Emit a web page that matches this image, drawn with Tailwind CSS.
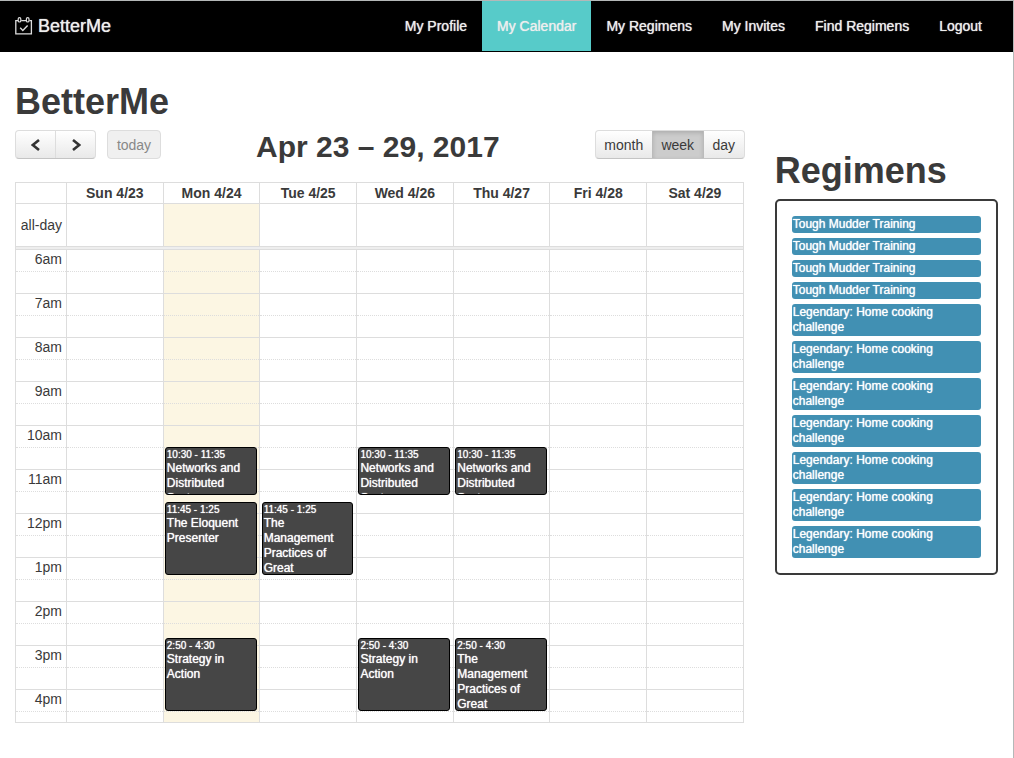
<!DOCTYPE html>
<html lang="en">
<head>
<meta charset="utf-8">
<title>BetterMe</title>
<meta name="viewport" content="width=device-width, initial-scale=1">
<script src="https://cdn.jsdelivr.net/npm/@tailwindcss/browser@4"></script>
</head>
<body class="min-h-screen border-t border-r border-[#b4b8b8] bg-white font-['Liberation_Sans',Arial,sans-serif] text-sm leading-5 text-[#3a3a3a]">
<header class="flex items-start justify-between bg-black pr-4 pb-px pl-[15px] text-[#eee] [text-shadow:0_0_1px_currentColor]">
  <a href="#" class="flex h-[50px] items-center gap-[5px] text-lg">
    <svg class="size-[18px]" viewBox="0 0 18 18" fill="none" stroke="#ddd" aria-hidden="true">
      <path d="M3 3.600H.8v13.200h15.600V3.600h-2M6.200 3.600h4.800" stroke-width="1.300"/>
      <rect x="3.200" y=".6" width="2.600" height="4.400" rx="1.300" stroke-width="1.200"/>
      <rect x="11.400" y=".6" width="2.600" height="4.400" rx="1.300" stroke-width="1.200"/>
      <path d="M5.200 10.800l2.600 2.600 4.800-4.800" stroke-width="1.400"/>
    </svg>
    <span>BetterMe</span>
  </a>
  <nav class="flex leading-[50px] whitespace-nowrap">
    <a href="#" class="px-[15px]">My Profile</a>
    <a href="#" aria-current="page" class="bg-[#57cbc9] px-[15px]">My Calendar</a>
    <a href="#" class="px-[15px]">My Regimens</a>
    <a href="#" class="px-[15px]">My Invites</a>
    <a href="#" class="px-[15px]">Find Regimens</a>
    <a href="#" class="px-[15px]">Logout</a>
  </nav>
</header>

<div class="grid grid-cols-[3fr_1fr]">
  <main class="px-[15px] pt-[30px]">
    <h1 class="text-4xl leading-10 font-bold">BetterMe</h1>
    <div class="mt-2 flex items-start justify-between">
      <div class="flex gap-[11px]">
        <div class="flex overflow-hidden rounded border border-[#ddd] border-b-[#c4c4c4] bg-linear-to-b from-white to-[#e9e9e9]">
          <button type="button" aria-label="Previous week" class="flex h-[27px] w-10 items-center justify-center border-r border-[#ddd]">
            <svg class="size-3" viewBox="0 0 12 12" fill="none" stroke="#333" stroke-width="2.600" aria-hidden="true"><path d="M9 1L2.800 6 9 11"/></svg>
          </button>
          <button type="button" aria-label="Next week" class="flex h-[27px] w-[39px] items-center justify-center">
            <svg class="size-3" viewBox="0 0 12 12" fill="none" stroke="#333" stroke-width="2.600" aria-hidden="true"><path d="M3 1l6.200 5L3 11"/></svg>
          </button>
        </div>
        <button type="button" disabled class="h-[29px] w-[54px] rounded border border-[#ddd] bg-[#f0f0f0] text-[#888]">today</button>
      </div>
      <h2 class="-mt-px text-3xl leading-9 font-bold">Apr 23 – 29, 2017</h2>
      <div class="flex overflow-hidden rounded border border-[#ddd] border-b-[#c4c4c4] bg-linear-to-b from-white to-[#e9e9e9]">
        <button type="button" class="h-[27px] w-14">month</button>
        <button type="button" aria-pressed="true" class="h-[27px] w-[52px] border-x border-[#bbb] bg-[#ccc] shadow-[inset_0_2px_4px_rgba(0,0,0,0.15)]">week</button>
        <button type="button" class="h-[27px] w-10">day</button>
      </div>
    </div>

    <div class="relative mt-[17px] mr-px">
      <table class="w-full table-fixed border-collapse">
        <thead>
          <tr class="h-[21px] leading-5">
            <th class="w-[51px] border border-[#ddd] p-0"></th>
            <th class="border border-[#ddd] p-0">Sun 4/23</th>
            <th class="border border-[#ddd] p-0">Mon 4/24</th>
            <th class="border border-[#ddd] p-0">Tue 4/25</th>
            <th class="border border-[#ddd] p-0">Wed 4/26</th>
            <th class="border border-[#ddd] p-0">Thu 4/27</th>
            <th class="border border-[#ddd] p-0">Fri 4/28</th>
            <th class="border border-[#ddd] p-0">Sat 4/29</th>
          </tr>
        </thead>
        <tbody id="slots">
          <tr class="h-[43px]">
            <td class="border border-[#ddd] p-0 pr-1 text-right">all-day</td>
            <td class="border border-[#ddd] p-0"></td>
            <td class="border border-[#ddd] bg-[#fcf6e3] p-0"></td>
            <td class="border border-[#ddd] p-0"></td>
            <td class="border border-[#ddd] p-0"></td>
            <td class="border border-[#ddd] p-0"></td>
            <td class="border border-[#ddd] p-0"></td>
            <td class="border border-[#ddd] p-0"></td>
          </tr>
          <tr class="h-[3px]"><td colspan="8" class="border border-[#ddd] bg-[#eee] p-0"></td></tr>
        </tbody>
      </table>
      <div id="events" class="absolute inset-x-0 top-[67px] bottom-0 grid grid-cols-7 pl-[51px] text-xs leading-[15px] text-white [text-shadow:0_0_1px_currentColor]"></div>
    </div>
  </main>

  <aside class="px-[15px] pt-[99px]">
    <h2 class="text-4xl leading-10 font-bold">Regimens</h2>
    <ul class="mt-2 flex flex-col gap-[5px] rounded-[5px] border-2 border-[#3a3a3a] p-[15px] text-xs leading-[15px] text-white [text-shadow:0_0_1px_currentColor]">
      <li class="rounded-[3px] bg-[#4190b3] p-px">Tough Mudder Training</li>
      <li class="rounded-[3px] bg-[#4190b3] p-px">Tough Mudder Training</li>
      <li class="rounded-[3px] bg-[#4190b3] p-px">Tough Mudder Training</li>
      <li class="rounded-[3px] bg-[#4190b3] p-px">Tough Mudder Training</li>
      <li class="rounded-[3px] bg-[#4190b3] p-px">Legendary: Home cooking challenge</li>
      <li class="rounded-[3px] bg-[#4190b3] p-px">Legendary: Home cooking challenge</li>
      <li class="rounded-[3px] bg-[#4190b3] p-px">Legendary: Home cooking challenge</li>
      <li class="rounded-[3px] bg-[#4190b3] p-px">Legendary: Home cooking challenge</li>
      <li class="rounded-[3px] bg-[#4190b3] p-px">Legendary: Home cooking challenge</li>
      <li class="rounded-[3px] bg-[#4190b3] p-px">Legendary: Home cooking challenge</li>
      <li class="rounded-[3px] bg-[#4190b3] p-px">Legendary: Home cooking challenge</li>
    </ul>
  </aside>
</div>

<script>
  // Half-hour rows from 6am; the view ends partway through the 4:30pm row.
  const slots = document.getElementById('slots');
  const hours = ['6am', '7am', '8am', '9am', '10am', '11am', '12pm', '1pm', '2pm', '3pm', '4pm'];
  const cells = (line) => [0, 1, 2, 3, 4, 5, 6].map((day) =>
    `<td class="border-x border-[#ddd] p-0 ${line} ${day === 1 ? 'bg-[#fcf6e3]' : ''}"></td>`).join('');
  let rows = '';
  hours.forEach((hour, i) => {
    const last = i === hours.length - 1;
    rows += `<tr class="h-[22px]"><td class="border-x border-t border-[#ddd] p-0 pr-1 text-right align-top leading-[19px]">${hour}</td>${cells('border-t')}</tr>`;
    rows += `<tr class="${last ? 'h-[11px] border-b border-[#ddd]' : 'h-[22px]'}"><td class="border-x border-t border-[#ddd] [border-top-style:dotted] p-0"></td>${cells('border-t [border-top-style:dotted]')}</tr>`;
  });
  slots.insertAdjacentHTML('beforeend', rows);

  // Each event: weekday, start and end in minutes after 6am, time label, title.
  const events = [
    [1, 270, 335, '10:30 - 11:35', 'Networks and Distributed Systems'],
    [1, 345, 445, '11:45 - 1:25', 'The Eloquent Presenter'],
    [1, 530, 630, '2:50 - 4:30', 'Strategy in Action'],
    [2, 345, 445, '11:45 - 1:25', 'The Management Practices of Great'],
    [3, 270, 335, '10:30 - 11:35', 'Networks and Distributed Systems'],
    [3, 530, 630, '2:50 - 4:30', 'Strategy in Action'],
    [4, 270, 335, '10:30 - 11:35', 'Networks and Distributed Systems'],
    [4, 530, 630, '2:50 - 4:30', 'The Management Practices of Great'],
  ];
  const y = (minutes) => Math.round(minutes * 44 / 60);
  document.getElementById('events').innerHTML = [0, 1, 2, 3, 4, 5, 6].map((day) =>
    `<div class="relative">${events.filter((e) => e[0] === day).map(([, start, end, time, title]) =>
      `<a href="#" class="absolute right-[3px] left-[2px] overflow-hidden rounded-[3px] border border-black bg-[#464646] px-px" style="top:${y(start)}px;height:${y(end) - y(start)}px"><span class="block text-[10px] leading-[13px]">${time}</span><span class="block">${title}</span></a>`).join('')}</div>`).join('');
</script>
</body>
</html>
